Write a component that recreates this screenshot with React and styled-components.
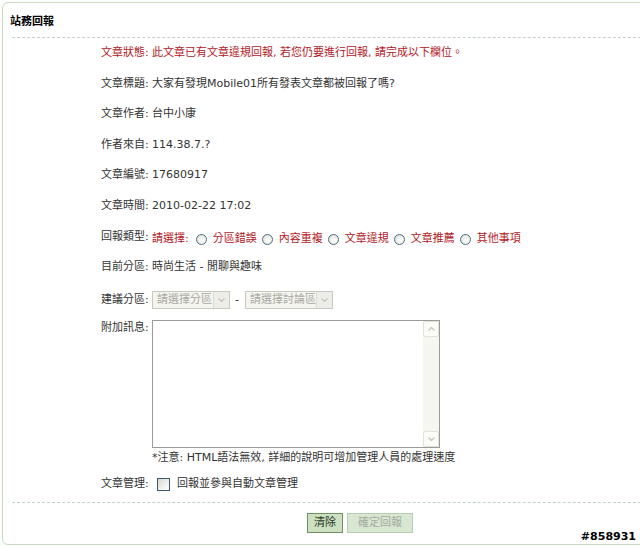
import styled, { createGlobalStyle } from "styled-components";

const GlobalStyle = createGlobalStyle`
  html, body {
    margin: 0;
    padding: 0;
    background: #fff;
    overflow: hidden;
  }
  body {
    font-family: "DejaVu Sans", "Noto Sans CJK TC", sans-serif;
    font-size: 11px;
    color: #333;
  }
`;

const Page = styled.div`
  position: relative;
  width: 640px;
  height: 546px;
  overflow: hidden;
`;

const Panel = styled.div`
  margin: 2px 0 0 2px;
  width: 700px;
  height: 543px;
  box-sizing: border-box;
  border: 1px solid #c6dbbf;
  border-radius: 6px 0 0 6px;
  padding-left: 7px;
`;

const Title = styled.div`
  height: 34px;
  display: flex;
  align-items: center;
  font-weight: bold;
  color: #000;
`;

const Divider = styled.div`
  margin-left: 2px;
  margin-top: ${(p) => p.$top || 0}px;
  border-top: 1px dashed #c3d3c3;
`;

const Form = styled.div`
  padding-left: 91px;
  display: flex;
  flex-direction: column;
`;

const Row = styled.div`
  display: flex;
  align-items: ${(p) => (p.$top ? "flex-start" : "center")};
  margin-top: ${(p) => p.$mt}px;
  line-height: 16px;
  min-height: 16px;
  color: ${(p) => (p.$red ? "#b3181f" : "#333")};
`;

const Label = styled.div`
  width: 51px;
  flex-shrink: 0;
  white-space: nowrap;
  margin-top: ${(p) => p.$shift || 0}px;
`;

const Value = styled.div`
  display: flex;
  align-items: center;
  white-space: nowrap;
`;

const Red = styled.span`
  color: #b3181f;
  margin-right: 2px;
`;

const Choice = styled.label`
  display: flex;
  align-items: center;
  gap: 6px;
  margin-left: 5px;
  color: #b3181f;
`;

const Radio = styled.span`
  width: 9px;
  height: 9px;
  border-radius: 50%;
  border: 1px solid #4e6b86;
  background: radial-gradient(circle at 60% 60%, #fff 0%, #e6e6e0 70%, #d4d4cc 100%);
`;

const Select = styled.div`
  display: flex;
  width: ${(p) => p.$w}px;
  height: 18px;
  box-sizing: border-box;
  border: 1px solid #c9c9c2;
  background: #f5f5f0;
  color: #a9a9a2;
`;

const SelectText = styled.div`
  flex: 1;
  padding-left: 4px;
  line-height: 16px;
`;

const SelectArrow = styled.div`
  width: 15px;
  border-left: 1px solid #dcdcd4;
  background: #eeeee8;
  display: flex;
  align-items: center;
  justify-content: center;
`;

const Dash = styled.span`
  margin: 0 6px 0 5px;
  color: #333;
`;

const TextBox = styled.div`
  display: flex;
  width: 288px;
  height: 128px;
  box-sizing: border-box;
  border: 1px solid #9a9a9a;
  background: #fff;
`;

const Area = styled.textarea`
  flex: 1;
  border: none;
  outline: none;
  resize: none;
  overflow: hidden;
  padding: 2px;
  font: inherit;
`;

const ScrollBar = styled.div`
  width: 16px;
  display: flex;
  flex-direction: column;
  justify-content: space-between;
  background: #f6f6f1;
`;

const ScrollBtn = styled.div`
  height: 16px;
  box-sizing: border-box;
  border: 1px solid #e2e2da;
  border-radius: 2px;
  background: #fbfbf8;
  display: flex;
  align-items: center;
  justify-content: center;
`;

const Note = styled.div`
  margin: 2px 0 0 51px;
  line-height: 16px;
`;

const Check = styled.span`
  width: 11px;
  height: 11px;
  margin: 0 7px 0 5px;
  border: 1px solid #3b5874;
  background: linear-gradient(135deg, #d8d8d0 0%, #f6f6f2 70%, #fff 100%);
`;

const Buttons = styled.div`
  display: flex;
  gap: 4px;
  margin: 10px 0 0 297px;
`;

const Button = styled.button`
  height: 20px;
  box-sizing: border-box;
  padding: 0 ${(p) => p.$pad}px;
  font: inherit;
  line-height: 16px;
  border: 1px solid ${(p) => (p.disabled ? "#b9cbb1" : "#6f9160")};
  background: ${(p) => (p.disabled ? "#d9e6d2" : "#cde0c1")};
  color: ${(p) => (p.disabled ? "#a3ab9f" : "#2b3a22")};
`;

const Stamp = styled.div`
  position: absolute;
  right: 4px;
  bottom: 3px;
  font-family: "DejaVu Sans", sans-serif;
  font-size: 11px;
  font-weight: bold;
  color: #000;
  text-shadow: 1px 0 #fff, -1px 0 #fff, 0 1px #fff, 0 -1px #fff;
`;

const Chevron = ({ up }) => (
  <svg width="7" height="4" viewBox="0 0 7 4">
    <path
      d={up ? "M0.5 3.5 L3.5 0.5 L6.5 3.5" : "M0.5 0.5 L3.5 3.5 L6.5 0.5"}
      fill="none"
      stroke="#c4c4bc"
      strokeWidth="1.2"
    />
  </svg>
);

const FakeSelect = ({ w, text }) => (
  <Select $w={w}>
    <SelectText>{text}</SelectText>
    <SelectArrow>
      <Chevron />
    </SelectArrow>
  </Select>
);

const info = [
  ["文章標題:", "大家有發現Mobile01所有發表文章都被回報了嗎?", 15],
  ["文章作者:", "台中小康", 14],
  ["作者來自:", "114.38.7.?", 15],
  ["文章編號:", "17680917", 14],
  ["文章時間:", "2010-02-22 17:02", 15],
];

const reasons = ["分區錯誤", "內容重複", "文章違規", "文章推薦", "其他事項"];

export default function App() {
  return (
    <Page>
      <GlobalStyle />
      <Panel>
        <Title>站務回報</Title>
        <Divider />
        <Form>
          <Row $mt={7} $red>
            <Label>文章狀態:</Label>
            <Value>此文章已有文章違規回報, 若您仍要進行回報, 請完成以下欄位。</Value>
          </Row>
          {info.map(([label, value, mt]) => (
            <Row key={label} $mt={mt}>
              <Label>{label}</Label>
              <Value>{value}</Value>
            </Row>
          ))}
          <Row $mt={17} $top>
            <Label $shift={-2}>回報類型:</Label>
            <Value>
              <Red>請選擇:</Red>
              {reasons.map((r) => (
                <Choice key={r}>
                  <Radio />
                  {r}
                </Choice>
              ))}
            </Value>
          </Row>
          <Row $mt={12}>
            <Label>目前分區:</Label>
            <Value>時尚生活 - 閒聊與趣味</Value>
          </Row>
          <Row $mt={16}>
            <Label>建議分區:</Label>
            <Value>
              <FakeSelect w={78} text="請選擇分區" />
              <Dash>-</Dash>
              <FakeSelect w={88} text="請選擇討論區" />
            </Value>
          </Row>
          <Row $mt={11} $top>
            <Label>附加訊息:</Label>
            <TextBox>
              <Area />
              <ScrollBar>
                <ScrollBtn>
                  <Chevron up />
                </ScrollBtn>
                <ScrollBtn>
                  <Chevron />
                </ScrollBtn>
              </ScrollBar>
            </TextBox>
          </Row>
          <Note>*注意: HTML語法無效, 詳細的說明可增加管理人員的處理速度</Note>
          <Row $mt={10}>
            <Label>文章管理:</Label>
            <Value>
              <Check />
              回報並參與自動文章管理
            </Value>
          </Row>
        </Form>
        <Divider $top={10} />
        <Buttons>
          <Button $pad={6}>清除</Button>
          <Button $pad={10} disabled>
            確定回報
          </Button>
        </Buttons>
      </Panel>
      <Stamp>#858931</Stamp>
    </Page>
  );
}
